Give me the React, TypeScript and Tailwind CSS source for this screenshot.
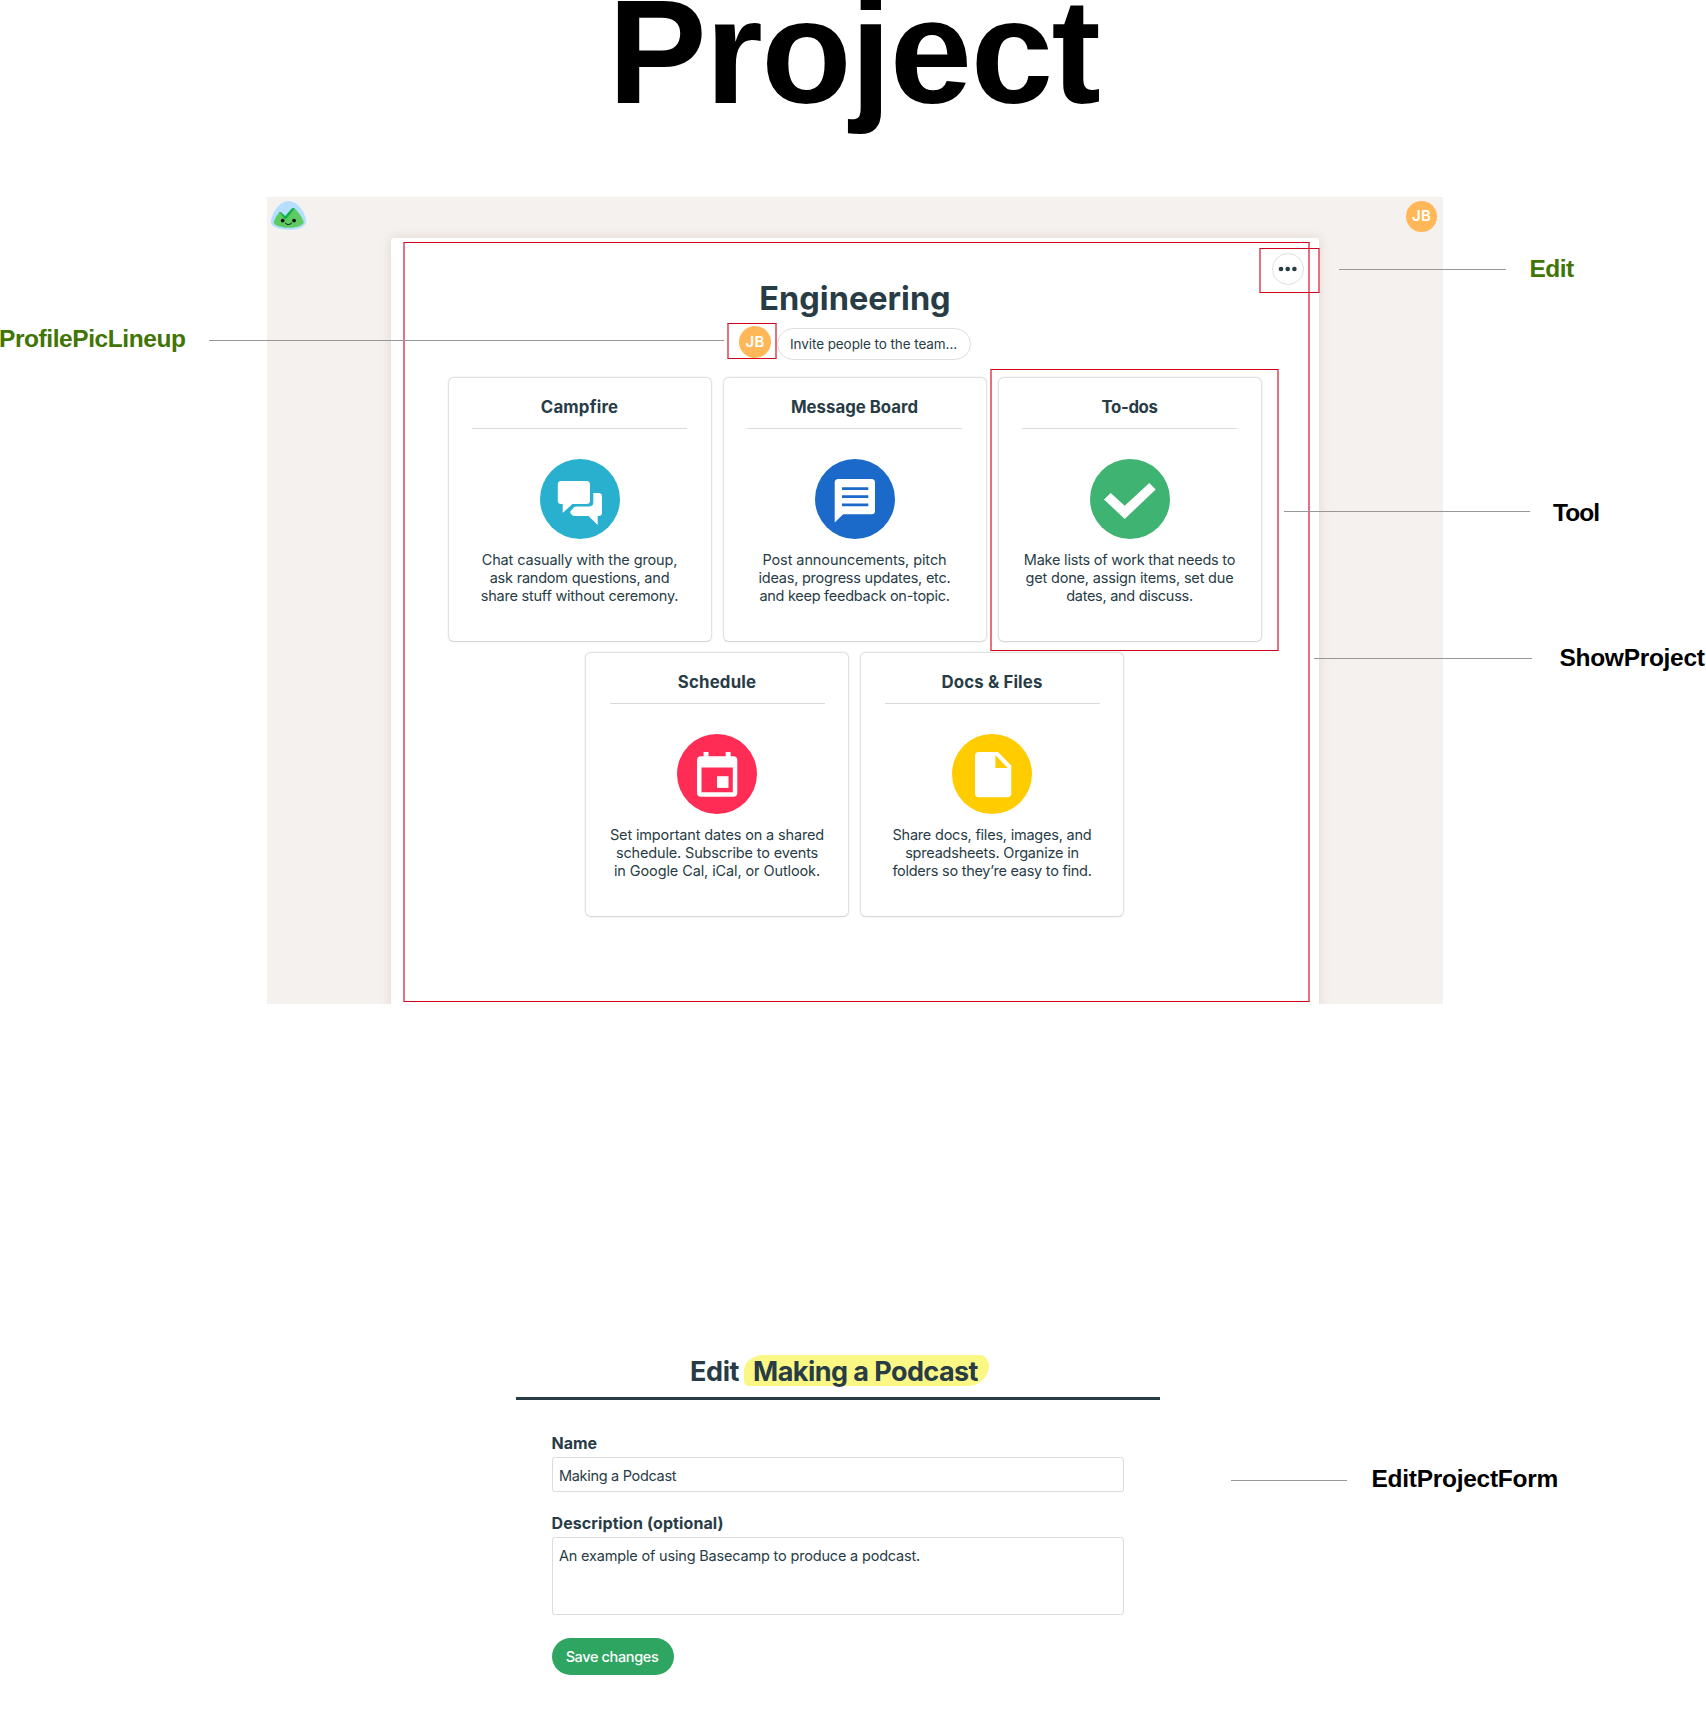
import type { ReactNode } from "react";

type ToolInfo = {
  title: string;
  titleClass: string;
  circle: string;
  icon: ReactNode;
  lines: [string, string][];
};

const campfireIcon = (
  <>
    <path
      fill="#fff"
      d="M53.3 34H58.5Q62 34 62 37.5V53.5Q62 57 58.5 57H57.7V66L48.5 57H35Q31.5 57 30 53L33.6 48.6Q34.8 47.4 37 47.4H49.5Q53.3 47.4 53.3 43.6Z"
    />
    <path
      fill="#fff"
      d="M21.2 22H46.5Q50 22 50 25.5V41.5Q50 45 46.5 45H32.4L22.7 54V45H21.2Q17.8 45 17.8 41.5V25.5Q17.8 22 21.2 22Z"
    />
  </>
);

const messageIcon = (
  <>
    <path
      fill="#fff"
      d="M23.5 20H56.5Q60 20 60 23.5V51.8Q60 55.3 56.5 55.3H28.2L19.7 63.6V23.5Q19.7 20 23.5 20Z"
    />
    <path stroke="#1b69c9" strokeWidth="2.7" d="M27 29.6H53.3M27 37.6H53.3M27 45.8H53.3" />
  </>
);

const todoIcon = <path fill="#fff" d="M14 40.4L20.7 34L34.7 46.7L59.3 24L65.7 30.4L34.7 60Z" />;

const scheduleIcon = (
  <>
    <path
      fill="#fff"
      fillRule="evenodd"
      d="M26.6 18H31.5V22.2H48.7V18H53.6V22.2H56.3Q60.3 22.2 60.3 26.2V58.8Q60.3 62.8 56.3 62.8H24Q20 62.8 20 58.8V26.2Q20 22.2 24 22.2H26.6ZM24.5 33.4V58.2H55.8V33.4Z"
    />
    <path fill="#fff" d="M40 42.2H51.5V53.9H40Z" />
  </>
);

const docsIcon = (
  <path
    fill="#fff"
    fillRule="evenodd"
    d="M27 18H46L59.3 31.6V59.3Q59.3 63.3 55.3 63.3H27Q23 63.3 23 59.3V22Q23 18 27 18ZM43.4 21.3V34H55.8Z"
  />
);

const firstRow: ToolInfo[] = [
  {
    title: "Campfire",
    titleClass: "tracking-[0.2px]",
    circle: "bg-[#29b0cf]",
    icon: campfireIcon,
    lines: [
      ["Chat casually with the group,", "tracking-[-0.135px]"],
      ["ask random questions, and", "tracking-[-0.21px]"],
      ["share stuff without ceremony.", "tracking-[-0.225px]"],
    ],
  },
  {
    title: "Message Board",
    titleClass: "tracking-[0px]",
    circle: "bg-[#1b69c9]",
    icon: messageIcon,
    lines: [
      ["Post announcements, pitch", "tracking-[-0.084px]"],
      ["ideas, progress updates, etc.", "tracking-[-0.234px]"],
      ["and keep feedback on-topic.", "tracking-[-0.268px]"],
    ],
  },
  {
    title: "To-dos",
    titleClass: "tracking-[-0.4px]",
    circle: "bg-[#3eb372]",
    icon: todoIcon,
    lines: [
      ["Make lists of work that needs to", "tracking-[-0.211px]"],
      ["get done, assign items, set due", "tracking-[-0.179px]"],
      ["dates, and discuss.", "tracking-[-0.287px]"],
    ],
  },
];

const secondRow: ToolInfo[] = [
  {
    title: "Schedule",
    titleClass: "tracking-[0.2px]",
    circle: "bg-[#ff2d55]",
    icon: scheduleIcon,
    lines: [
      ["Set important dates on a shared", "tracking-[-0.15px]"],
      ["schedule. Subscribe to events", "tracking-[-0.153px]"],
      ["in Google Cal, iCal, or Outlook.", "tracking-[-0.107px]"],
    ],
  },
  {
    title: "Docs & Files",
    titleClass: "tracking-[0.15px]",
    circle: "bg-[#ffcc00]",
    icon: docsIcon,
    lines: [
      ["Share docs, files, images, and", "tracking-[-0.217px]"],
      ["spreadsheets. Organize in", "tracking-[-0.207px]"],
      ["folders so they’re easy to find.", "tracking-[-0.257px]"],
    ],
  },
];

function Tool({ tool }: { tool: ToolInfo }) {
  return (
    <div className="flex h-[265px] w-[264px] flex-col items-center rounded-[6px] border border-[#e2e2e2] border-b-[#d9d9d9] bg-white px-[23.5px] pt-[17px] shadow-[0_0_2px_rgba(0,0,0,0.12)]">
      <h2 className={`text-[16.8px] leading-6 font-bold whitespace-nowrap ${tool.titleClass}`}>{tool.title}</h2>
      <div className="mt-[9px] h-px w-full bg-[#d8dadb]" />
      <div className={`mt-[30px] size-20 shrink-0 rounded-full ${tool.circle}`}>
        <svg viewBox="0 0 80 80" className="size-20" fill="none">
          {tool.icon}
        </svg>
      </div>
      <div className="mt-3 text-center text-[14.5px] leading-[18px] whitespace-nowrap">
        {tool.lines.map(([text, tracking]) => (
          <p key={text} className={tracking}>
            {text}
          </p>
        ))}
      </div>
    </div>
  );
}

function Logo() {
  return (
    <svg viewBox="0 0 36 29" className="h-[29px] w-9">
      <path fill="#b5deff" d="M17.6 0C26.5 0 34.6 12 35.2 20.5C35.5 26 27 28.8 17.6 28.8S-0.3 26 0 20.5C0.6 12 8.7 0 17.6 0Z" />
      <path
        fill="#5ecb62"
        d="M2.6 21.5C3.8 17.6 6 13.8 8 11.7Q9.2 10.5 10.3 11.7L14.2 16.2L21.6 7.5Q22.6 6.5 23.7 7.6C28 12 31.4 16.6 32.8 21.3C31.5 25.3 24 26.8 17.6 26.8S4 25.3 2.6 21.5Z"
      />
      <path
        fill="#0fb04a"
        d="M7.8 11.8Q9.2 10.5 10.3 11.5L14.2 15L20.8 7.6Q22.6 6 24 8L22.8 8.6L15.8 17.4Q14.4 18.8 13 17.2L9.6 12.3Z"
      />
      <circle cx="11.7" cy="19.6" r="1.9" fill="#111" />
      <circle cx="23.1" cy="19.6" r="1.9" fill="#111" />
      <path fill="none" stroke="#111" strokeWidth="1" strokeLinecap="round" d="M14.4 22.2Q17.4 25.2 20.5 22.2" />
    </svg>
  );
}

function Project() {
  return (
    <section className="mt-[94px] ml-[267px] h-[807px] w-[1176px] overflow-hidden bg-[#f5f1ee] text-[#283c46]">
      <div className="flex h-[41px] items-start justify-between pt-1 pr-[6px] pl-1">
        <Logo />
        <div className="flex size-[31px] items-center justify-center rounded-full bg-[#ffb757] text-[15px] font-semibold tracking-[0.3px] text-white">
          JB
        </div>
      </div>
      <div className="relative mx-auto h-[800px] w-[928px] rounded-[3px] bg-white pt-[43px] shadow-[0_0_12px_rgba(130,90,75,0.16)]">
        <button className="absolute top-[15px] right-[15px] flex size-8 items-center justify-center rounded-full border border-[#dfdfdf]">
          <svg viewBox="0 0 20 6" className="h-[6px] w-5 shrink-0" fill="#283c46">
            <circle cx="3" cy="3" r="2.3" />
            <circle cx="9.7" cy="3" r="2.3" />
            <circle cx="16.4" cy="3" r="2.3" />
          </svg>
        </button>
        <h1 className="pt-px text-center text-[32.5px] leading-[33px] font-bold">Engineering</h1>
        <div className="mt-[11px] flex justify-center gap-[6px]">
          <div className="flex size-8 items-center justify-center rounded-full bg-[#ffb757] text-[15px] font-semibold tracking-[0.3px] text-white">
            JB
          </div>
          <button className="mt-[2px] flex h-8 w-[194px] items-center justify-center rounded-full border border-[#dfdfdf] pr-px text-[13.5px] tracking-[-0.08px]">
            Invite people to the team...
          </button>
        </div>
        <div className="mt-[17px] flex flex-col gap-[10px] pr-px">
          <div className="flex justify-center gap-[11px]">
            {firstRow.map((tool) => (
              <Tool key={tool.title} tool={tool} />
            ))}
          </div>
          <div className="flex justify-center gap-[11px]">
            {secondRow.map((tool) => (
              <Tool key={tool.title} tool={tool} />
            ))}
          </div>
        </div>
      </div>
    </section>
  );
}

function EditForm() {
  return (
    <section className="mt-[351px] ml-[516px] w-[644px] text-[#283c46]">
      <h2 className="flex h-[45px] items-start justify-center border-b-[3px] border-[#283c46] pl-[3px] text-[27px] leading-[31px] font-bold whitespace-nowrap">
        <span className="mt-px tracking-[-0.4px]">Edit</span>
        <span className="ml-[5px] h-[31px] rounded-[22px_10px_24px_5px/17px_12px_22px_6px] bg-[#fbf785] pr-[11px] pl-[9px] tracking-[-0.56px]">
          <span className="relative top-px">Making a Podcast</span>
        </span>
      </h2>
      <div className="mt-[33px] ml-[35.5px] w-[572px]">
        <label className="block text-[16px] leading-[20px] font-bold">Name</label>
        <div className="mt-1 flex h-[35px] items-center rounded-[3px] border border-[#dcdcdc] pt-[2px] pl-[6.5px] text-[14.5px] tracking-[-0.31px]">
          Making a Podcast
        </div>
        <label className="mt-[21px] block text-[16px] leading-[20px] font-bold tracking-[0.1px]">
          Description (optional)
        </label>
        <div className="mt-[4px] h-[78px] rounded-[3px] border border-[#dcdcdc] pt-[9px] pl-[6.5px] text-[14.5px] leading-[18px] tracking-[-0.18px]">
          An example of using Basecamp to produce a podcast.
        </div>
        <button className="mt-[23px] flex h-[37px] w-[122px] items-center justify-center rounded-full bg-[#2fa562] pr-px text-[14.5px] font-medium tracking-[-0.37px] text-white">
          Save changes
        </button>
      </div>
    </section>
  );
}

function Outline({ place }: { place: string }) {
  return <div className={`absolute border-x-2 border-y border-x-[#e7707f] border-y-[#d0021b] ${place}`} />;
}

function Leader({ place }: { place: string }) {
  return <div className={`absolute h-px bg-[#979797] ${place}`} />;
}

function Label({ place, children }: { place: string; children: ReactNode }) {
  return (
    <div className={`absolute font-['Liberation_Sans',Arial,sans-serif] text-[24.5px] leading-6 font-bold whitespace-nowrap ${place}`}>
      {children}
    </div>
  );
}

function Annotations() {
  return (
    <div className="pointer-events-none absolute inset-0">
      <Outline place="left-[403px] top-[242px] h-[760px] w-[907px]" />
      <Outline place="left-[1259px] top-[248px] h-[45px] w-[61px]" />
      <Outline place="left-[727px] top-[323px] h-[36px] w-[50px]" />
      <Outline place="left-[990px] top-[369px] h-[282px] w-[289px]" />
      <Leader place="left-[209px] top-[340px] w-[515px]" />
      <Leader place="left-[1339px] top-[269px] w-[167px]" />
      <Leader place="left-[1284px] top-[511px] w-[246px]" />
      <Leader place="left-[1314px] top-[658px] w-[218px]" />
      <Leader place="left-[1231px] top-[1480px] w-[116px]" />
      <Label place="left-[-1px] top-[327px] tracking-[-0.42px] text-[#417505]">ProfilePicLineup</Label>
      <Label place="left-[1529.5px] top-[257px] tracking-[-0.5px] text-[#417505]">Edit</Label>
      <Label place="left-[1553px] top-[501px] tracking-[-0.95px] text-black">Tool</Label>
      <Label place="left-[1559.5px] top-[646px] tracking-[-0.3px] text-black">ShowProject</Label>
      <Label place="left-[1371.5px] top-[1467px] tracking-[-0.27px] text-black">EditProjectForm</Label>
    </div>
  );
}

export default function App() {
  return (
    <main className="relative h-[1714px] w-[1706px] overflow-hidden bg-white font-[Inter,sans-serif]">
      <h1 className="ml-[608px] h-[103px] pt-px font-['Liberation_Sans',Arial,sans-serif] text-[148px] leading-[102px] font-bold tracking-[-1.5px] text-black">
        Project
      </h1>
      <Project />
      <EditForm />
      <Annotations />
    </main>
  );
}
